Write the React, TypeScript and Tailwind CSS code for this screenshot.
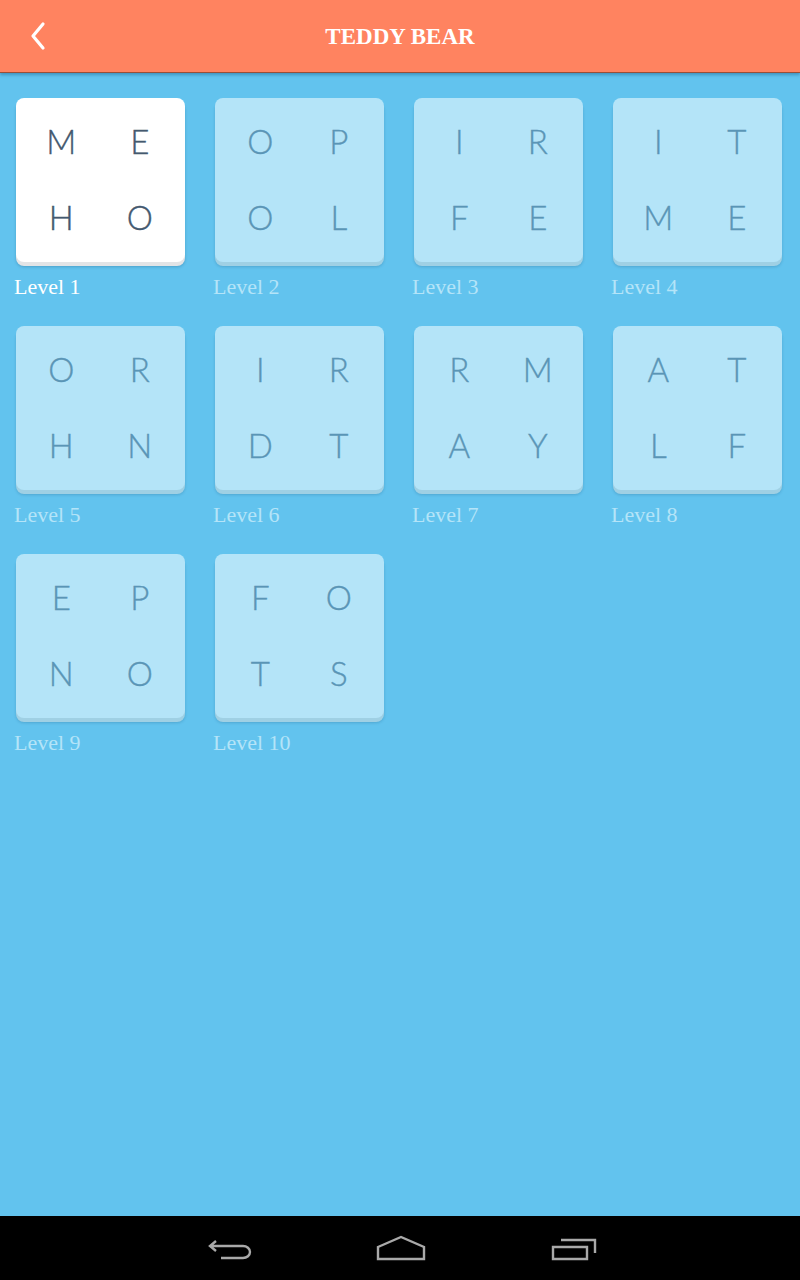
import React from "react";

const levels: string[][] = [
  ["M", "E", "H", "O"],
  ["O", "P", "O", "L"],
  ["I", "R", "F", "E"],
  ["I", "T", "M", "E"],
  ["O", "R", "H", "N"],
  ["I", "R", "D", "T"],
  ["R", "M", "A", "Y"],
  ["A", "T", "L", "F"],
  ["E", "P", "N", "O"],
  ["F", "O", "T", "S"],
];

function Tile({ letters, index }: { letters: string[]; index: number }) {
  const active = index === 0;
  return (
    <div className="flex flex-col">
      <div
        className={
          active
            ? "h-[164px] w-[169px] rounded-[8px] bg-white shadow-[0_4px_0_#e2e4e6,0_5px_3px_rgba(0,60,100,0.25)] grid grid-cols-2 grid-rows-2 px-[6px] py-[6px]"
            : "h-[164px] w-[169px] rounded-[8px] bg-[#b4e4f8] shadow-[0_4px_0_#9fd0e4,0_5px_3px_rgba(0,60,100,0.2)] grid grid-cols-2 grid-rows-2 px-[6px] py-[6px]"
        }
      >
        {letters.map((l, i) => (
          <div
            key={i}
            className={
              active
                ? "flex items-center justify-center text-[33px] font-light text-[#44596f] font-['Lato',sans-serif] [-webkit-text-stroke:0.4px_#44596f]"
                : "flex items-center justify-center text-[33px] font-light text-[#5a95b6] font-['Lato',sans-serif] [-webkit-text-stroke:0.4px_#5a95b6]"
            }
          >
            {l}
          </div>
        ))}
      </div>
      <div
        className={
          active
            ? "mt-[13px] -ml-[2px] text-[22px] leading-[24px] text-white font-['Liberation_Serif',serif]"
            : "mt-[13px] -ml-[2px] text-[22px] leading-[24px] text-[#b4e4f8] font-['Liberation_Serif',serif]"
        }
      >
        Level {index + 1}
      </div>
    </div>
  );
}

export default function App() {
  return (
    <div className="w-[800px] h-[1280px] flex flex-col bg-[#62c3ee] overflow-hidden">
      <div className="relative z-10 h-[73px] bg-[#ff8360] border-b border-[#9a4f38] shadow-[0_2px_3px_rgba(0,60,110,0.35)] flex items-center justify-center pt-[3px] shrink-0">
        <svg
          className="absolute left-[27px] top-[21px]"
          width="22"
          height="30"
          viewBox="0 0 22 30"
          fill="none"
        >
          <path
            d="M16 3 L6 15 L16 27"
            stroke="white"
            strokeWidth="3.2"
            strokeLinecap="round"
            strokeLinejoin="round"
          />
        </svg>
        <div className="text-white text-[23px] font-bold font-['Liberation_Serif',serif]">
          TEDDY BEAR
        </div>
      </div>
      <div className="flex-1 pl-[16px] pt-[25px]">
        <div className="grid grid-cols-[169px_169px_169px_169px] gap-x-[30px] gap-y-[27px]">
          {levels.map((l, i) => (
            <Tile key={i} letters={l} index={i} />
          ))}
        </div>
      </div>
      <div className="h-[64px] bg-black flex items-center pl-[207px] shrink-0">
        <svg width="46" height="26" viewBox="0 0 46 26" fill="none">
          <path
            d="M9 6 L3 11 L9 16 M3 11 H36 a7 6 0 0 1 0 12 H14"
            stroke="#a9a9a9"
            strokeWidth="2.4"
            strokeLinejoin="miter"
          />
        </svg>
        <svg className="ml-[123px]" width="50" height="26" viewBox="0 0 50 26" fill="none">
          <path
            d="M2 12 L25 2 L48 12 V24 H2 Z"
            stroke="#a9a9a9"
            strokeWidth="2.4"
          />
        </svg>
        <svg className="ml-[125px]" width="46" height="26" viewBox="0 0 46 26" fill="none">
          <path d="M2 12 H36 V24 H2 Z" stroke="#a9a9a9" strokeWidth="2.4" />
          <path d="M10 5 H44 V18" stroke="#a9a9a9" strokeWidth="2.4" />
        </svg>
      </div>
    </div>
  );
}
